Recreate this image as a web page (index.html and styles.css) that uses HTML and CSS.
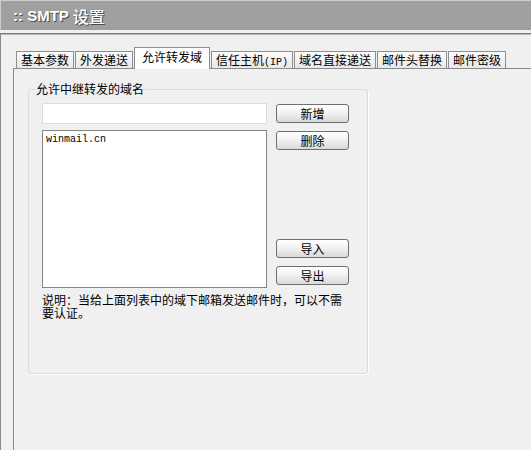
FILE: index.html
```html
<!DOCTYPE html>
<html lang="zh-CN">
<head>
<meta charset="utf-8">
<title>SMTP 设置</title>
<link rel="stylesheet" href="styles.css">
</head>
<body>
<div class="header"><span class="h-latin">:: SMTP </span><span class="h-cjk">设置</span></div>
<div class="content">
  <div class="tabs">
    <div class="tab">基本参数</div>
    <div class="tab">外发递送</div>
    <div class="tab active">允许转发域</div>
    <div class="tab">信任主机<span class="mono">(IP)</span></div>
    <div class="tab">域名直接递送</div>
    <div class="tab">邮件头替换</div>
    <div class="tab">邮件密级</div>
  </div>
  <div class="panel">
    <fieldset class="group">
      <legend class="group-title">允许中继转发的域名</legend>
      <div class="group-body">
        <div class="left-col">
          <input class="domain-input" type="text" value="">
          <div class="domain-list"><div class="domain-item">winmail.cn</div></div>
        </div>
        <div class="btn-col">
          <button class="btn btn-add">新增</button>
          <button class="btn btn-del">删除</button>
          <button class="btn btn-import">导入</button>
          <button class="btn btn-export">导出</button>
        </div>
      </div>
      <p class="note">说明：当给上面列表中的域下邮箱发送邮件时，可以不需要认证。</p>
    </fieldset>
  </div>
</div>
</body>
</html>
```
FILE: styles.css
```css
html, body {
  margin: 0;
  padding: 0;
  height: 100%;
  overflow: hidden;
}
body {
  background: #f0f0f0;
  font-family: "Noto Sans CJK SC", "Noto Sans", sans-serif;
  font-size: 12px;
  color: #000;
  display: flex;
  flex-direction: column;
}
.header {
  flex: none;
  background: #a0a0a0;
  border-top: 1px solid #cdcdcd;
  border-left: 1px solid #cdcdcd;
  box-sizing: border-box;
  height: 30px;
  padding-left: 12px;
  display: flex;
  align-items: center;
  color: #fff;
  font-weight: bold;
  text-shadow: 1px 1px 0 #4a4a4a;
  white-space: pre;
}
.h-latin {
  font-family: "Liberation Sans", Arial, sans-serif;
  font-size: 15px;
}
.h-cjk {
  font-family: "Noto Sans CJK SC", sans-serif;
  font-size: 16px;
  font-weight: 500;
}
.content {
  flex: 1;
  min-height: 0;
  margin-top: 3px;
  border-top: 1px solid #7c7c7c;
  border-left: 1px solid #8a8a8a;
  box-shadow: inset 0 1px 0 #b9b9b9;
  padding-top: 13px;
  display: flex;
  flex-direction: column;
}
.tabs {
  flex: none;
  display: flex;
  align-items: flex-end;
  margin-left: 15px;
  gap: 1px;
  position: relative;
  z-index: 1;
  height: 21px;
}
.tab {
  height: 17px;
  box-sizing: border-box;
  border: 1px solid #8e8e8e;
  border-bottom: none;
  padding: 0 4px;
  line-height: 15px;
  background: linear-gradient(#fbfbfb, #e8e8e8);
  white-space: nowrap;
}
.tab.active {
  height: 22px;
  margin-bottom: -1px;
  padding: 0 7px;
  line-height: 17px;
  background: #fff;
}
.mono {
  font-family: "Liberation Mono", monospace;
  font-size: 10px;
}
.panel {
  flex: 1;
  min-height: 0;
  margin-left: 12px;
  border-top: 1px solid #8a8a8a;
  border-left: 1px solid #8a8a8a;
  padding-left: 14px;
  padding-top: 13px;
}
.group {
  margin: 0;
  width: 340px;
  height: 292px;
  box-sizing: border-box;
  border: 1px solid #d3dde4;
  border-radius: 3px;
  box-shadow: 1px 1px 0 #fff;
  padding: 7px 13px 0 13px;
}
.group-title {
  padding: 0 1px;
  margin-left: -7px;
  line-height: 14px;
}
.group-body {
  display: flex;
  gap: 9px;
}
.left-col {
  width: 225px;
  display: flex;
  flex-direction: column;
  gap: 6px;
}
.domain-input {
  margin: 0;
  height: 21px;
  box-sizing: border-box;
  border: 1px solid #dcdcdc;
  background: #fff;
  padding: 0 3px;
  font: inherit;
}
.domain-list {
  height: 158px;
  box-sizing: border-box;
  border: 1px solid #858585;
  background: #fff;
  padding: 2px 3px;
}
.domain-item {
  font-family: "Liberation Mono", monospace;
  font-size: 10px;
  line-height: 14px;
}
.btn-col {
  width: 73px;
  display: flex;
  flex-direction: column;
}
.btn {
  margin: 0;
  height: 19px;
  padding: 0;
  box-sizing: border-box;
  border: 1px solid #6f6f6f;
  border-radius: 3px;
  background: linear-gradient(#ffffff 0%, #f4f4f4 40%, #d9d9d9 100%);
  font: inherit;
  line-height: 17px;
  color: #000;
}
.btn-add { margin-top: 1px; }
.btn-del { margin-top: 8px; }
.btn-import { margin-top: auto; }
.btn-export { margin-top: 8px; margin-bottom: 3px; }
.note {
  margin: 5px 0 0 0;
  width: 306px;
  line-height: 13px;
}
```
